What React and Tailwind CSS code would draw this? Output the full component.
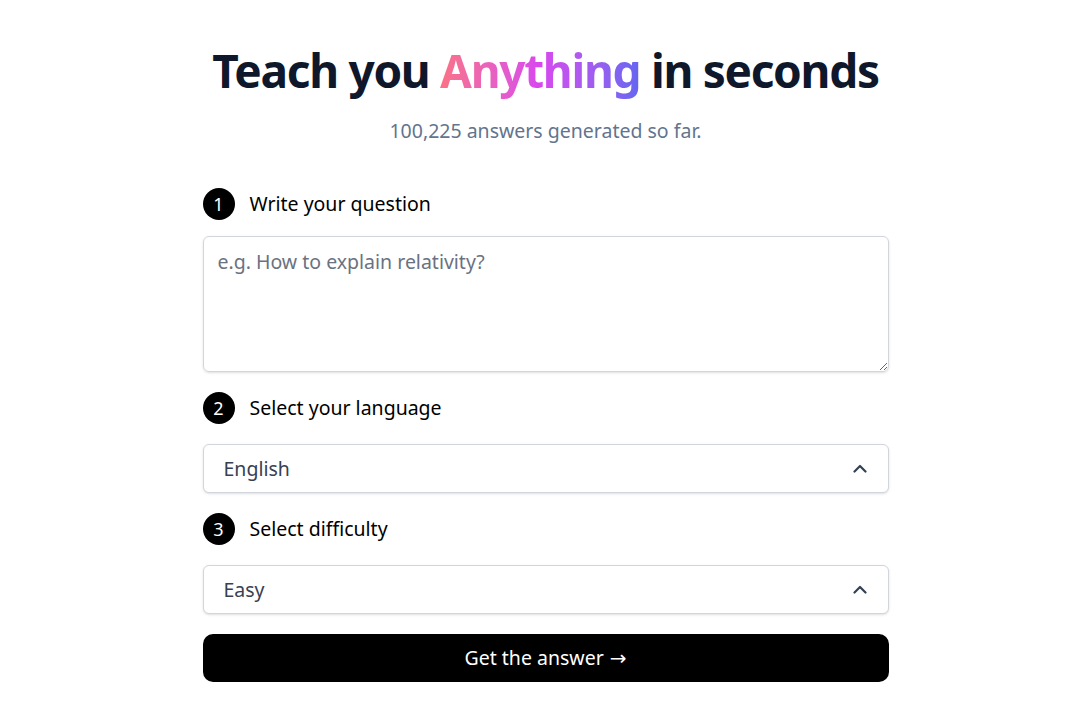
import React, { useState } from 'react';

const font = { fontFamily: '"Noto Sans", "Open Sans", Arial, sans-serif' };

const Chevron = () => (
  <svg width="14" height="9" viewBox="0 0 14 9" fill="none" stroke="#334155" strokeWidth="2.2" strokeLinecap="round" strokeLinejoin="round">
    <path d="M1.5 7.5L7 2l5.5 5.5" />
  </svg>
);

const Step = ({ n, label }) => (
  <div className="flex items-center gap-[15px] h-8">
    <span className="w-8 h-8 rounded-full bg-black text-white flex items-center justify-center text-[18px] leading-none">{n}</span>
    <span className="text-[19.5px] leading-none text-black">{label}</span>
  </div>
);

const SelectBox = ({ value }) => (
  <div className="h-[49px] w-full border border-gray-300 rounded-md shadow-sm bg-white flex items-center justify-between pl-5 pr-[21px]">
    <span className="text-[19.5px] text-gray-700">{value}</span>
    <Chevron />
  </div>
);

export default function App() {
  const [question, setQuestion] = useState('');

  return (
    <div className="min-h-screen bg-white flex flex-col items-center pl-[11px]" style={font}>
      <h1 className="mt-[40px] text-[46px] font-bold text-slate-900 leading-[60px] tracking-[-1.3px]">
        Teach you{' '}
        <span className="bg-gradient-to-r from-[#fb7185] via-[#d946ef] to-[#6366f1] bg-clip-text text-transparent">Anything</span>{' '}
        in seconds
      </h1>
      <p className="mt-[17px] text-[19.5px] leading-[28px] text-slate-500">100,225 answers generated so far.</p>

      <div className="w-[686px] mt-[43px] flex flex-col">
        <Step n="1" label="Write your question" />
        <textarea
          value={question}
          onChange={e => setQuestion(e.target.value)}
          placeholder="e.g. How to explain relativity?"
          className="mt-[16px] h-[136px] w-full border border-gray-300 rounded-md shadow-sm px-[14px] py-[10px] text-[19.5px] placeholder:text-gray-500 focus:outline-none"
        />
        <div className="mt-[20px]">
          <Step n="2" label="Select your language" />
        </div>
        <div className="mt-[20px]">
          <SelectBox value="English" />
        </div>
        <div className="mt-[20px]">
          <Step n="3" label="Select difficulty" />
        </div>
        <div className="mt-[20px]">
          <SelectBox value="Easy" />
        </div>
        <button className="mt-[20px] h-[48px] w-full rounded-[10px] bg-black text-white text-[19.5px] flex items-center justify-center">
          Get the answer <span className="ml-[6px] text-[20px]" style={{ fontFamily: '"DejaVu Sans", sans-serif' }}>→</span>
        </button>
      </div>
    </div>
  );
}
